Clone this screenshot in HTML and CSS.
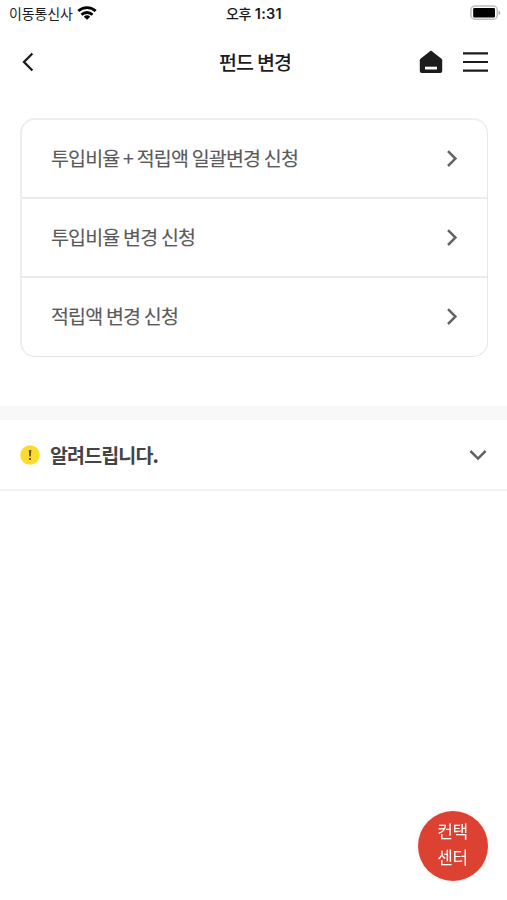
FILE: index.html
```html
<!DOCTYPE html>
<html lang="ko">
<head>
<meta charset="utf-8">
<title>펀드 변경</title>
<link rel="stylesheet" href="styles.css">
</head>
<body>
<div class="status">
  <div class="carrier"><span class="carrier-name">이동통신사</span>
    <svg class="wifi" width="20" height="14" viewBox="0 0 20 14" fill="none" stroke="#000" stroke-width="2.8"><path d="M1.3 5.1a12.6 12.6 0 0 1 17.4 0M4.5 8.7a8 8 0 0 1 11 0"/><path d="M10 13.8L6.8 10.8a4.8 4.8 0 0 1 6.4 0z" fill="#000" stroke="none"/></svg>
  </div>
  <div class="time"><span class="ampm">오후</span> <span class="clock">1:31</span></div>
  <svg class="battery" width="31" height="16" viewBox="0 0 31 16"><rect x=".9" y="1" width="26.4" height="13.2" rx="4" fill="#fff" stroke="#bdbdbd" stroke-width="1.5"/><rect x="3.2" y="3" width="21.8" height="9.4" rx="1.2"/><path d="M28.6 5.4c2.3 1 2.3 3.6 0 4.6z" fill="#aaa"/></svg>
</div>
<header class="header">
  <svg class="back" width="12" height="20" viewBox="0 0 12 20" fill="none" stroke="#1c1c1e" stroke-width="2.3"><path d="M10.4 1.5L2 10l8.4 8.5"/></svg>
  <h1 class="title">펀드 변경</h1>
  <div class="actions">
    <svg width="24" height="24" viewBox="0 0 24 24"><path d="M12 .6L22.2 8.4Q23.2 9.2 23.2 10.3V21Q23.2 23 21.2 23H2.8Q.8 23 .8 21V10.3Q.8 9.2 1.8 8.4z" fill="#1c1c1e"/><rect x="6" y="16.7" width="12" height="2.8" fill="#fff"/></svg>
    <svg width="26" height="22" viewBox="0 0 26 22" stroke="#1c1c1e" stroke-width="2.1"><path d="M0 2.4h25M0 11h25M0 19.6h25"/></svg>
  </div>
</header>
<main>
  <ul class="menu">
    <li class="item"><span class="label">투입비율 + 적립액 일괄변경 신청</span><svg class="chev" width="12" height="18" viewBox="0 0 12 18"><path d="M2 1.2l7.4 7.4L2 16"/></svg></li>
    <li class="item"><span class="label">투입비율 변경 신청</span><svg class="chev" width="12" height="18" viewBox="0 0 12 18"><path d="M2 1.2l7.4 7.4L2 16"/></svg></li>
    <li class="item"><span class="label">적립액 변경 신청</span><svg class="chev" width="12" height="18" viewBox="0 0 12 18"><path d="M2 1.2l7.4 7.4L2 16"/></svg></li>
  </ul>
  <section class="notice">
    <svg width="20" height="20" viewBox="0 0 20 20"><circle cx="10" cy="10" r="9.8" fill="#fbdc2c"/><path d="M8.8 5h2.5l-.5 6.5H9.3zM9.1 13h1.9v1.9H9.1z" fill="#5b4c20"/></svg>
    <h2 class="notice-title">알려드립니다.</h2>
    <svg class="chev" width="18" height="12" viewBox="0 0 18 12"><path d="M1.4 2L9 9.6 16.6 2"/></svg>
  </section>
</main>
<div class="contact"><span>컨택</span><span>센터</span></div>
</body>
</html>
```
FILE: styles.css
```css
* { box-sizing: border-box; margin: 0; padding: 0; }
body { height: 900px; background: #fff; color: #1c1c1e; font-family: "Noto Sans CJK KR", sans-serif; overflow: hidden; }
svg { display: block; flex: none; }
.status { height: 26px; display: grid; grid-template-columns: 1fr auto 1fr; padding: 0 6px 0 9px; align-items: center; line-height: 24px; }
.carrier { display: flex; align-items: center; gap: 4px; }
.carrier-name { font-size: 14px; letter-spacing: -.15px; line-height: 24px; padding-bottom: 1px; }
.wifi { margin-bottom: 1px; }
.time { font-size: 14px; font-weight: 500; white-space: nowrap; letter-spacing: -.3px; padding-right: 2px; }
.clock { font-family: Inter, sans-serif; font-weight: 600; font-size: 14.5px; letter-spacing: .3px; }
.battery { justify-self: end; }
.header { height: 72px; display: grid; grid-template-columns: 1fr auto 1fr; align-items: center; padding: 0 18px 0 22px; }
.title { font-size: 19.5px; font-weight: 500; letter-spacing: -.95px; word-spacing: -.6px; line-height: 28px; padding: 0 1px 1px 0; }
.actions { display: flex; align-items: center; justify-content: flex-end; gap: 20px; }
.menu { list-style: none; margin: 20px 19px 49px 20px; height: 239px; border-style: solid; border-color: #efefef #e6e6e6 #e4e4e4 #ededed; border-width: 2px 1px 1px 2px; border-radius: 15px; display: grid; grid-template-rows: 77px 79px 80px; }
.item { display: flex; align-items: center; justify-content: space-between; padding: 0 29px 0 29px; }
.item + .item { border-top: 2px solid #ebebeb; }
.label { font-size: 19.5px; font-weight: 400; -webkit-text-stroke: .15px; line-height: 28px; padding-bottom: 2px; letter-spacing: -.85px; word-spacing: -.9px; color: #5a5a5a; }
.chev { fill: none; stroke: #636363; stroke-width: 2.5; }
.notice { height: 85px; border-top: 14px solid #f8f8f8; border-bottom: 2px solid #f2f2f2; display: flex; align-items: center; padding: 0 20px; }
.notice-title { margin-left: 10px; flex: 1; font-size: 19.5px; line-height: 30px; font-weight: 700; letter-spacing: -.85px; color: #444; }
.contact { position: fixed; left: 417.5px; top: 810.5px; width: 70px; height: 70px; border-radius: 50%; background: #dc4132; color: #fff; display: flex; flex-direction: column; align-items: center; justify-content: center; font-size: 17px; line-height: 26px; letter-spacing: -.5px; padding-bottom: 3px; box-shadow: 0 0 5px rgba(0,0,0,.08); }
```
